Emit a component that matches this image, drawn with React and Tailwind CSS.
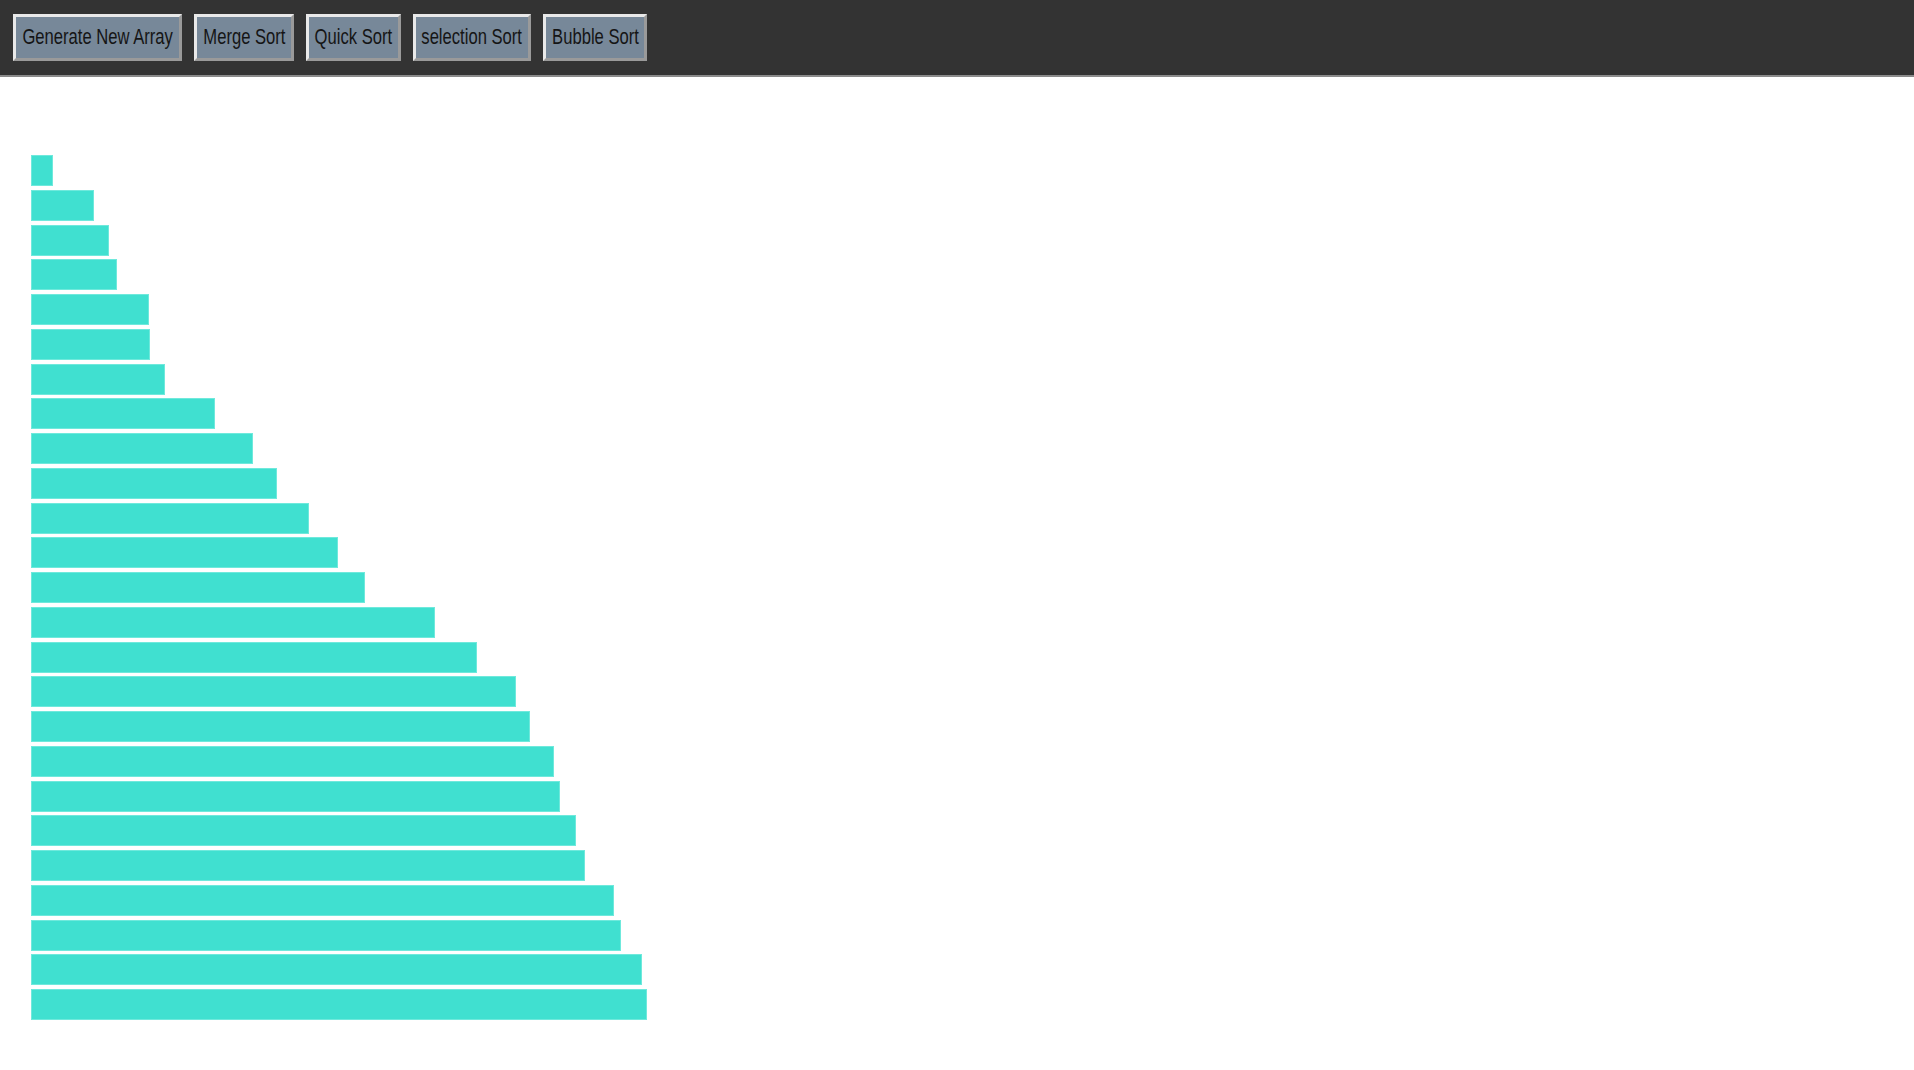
import React, { useState } from 'react';

const buttons = [
  { label: 'Generate New Array', width: 'w-[169px]' },
  { label: 'Merge Sort', width: 'w-[100px]' },
  { label: 'Quick Sort', width: 'w-[95px]' },
  { label: 'selection Sort', width: 'w-[118px]' },
  { label: 'Bubble Sort', width: 'w-[104px]' },
];

const initialArray = [
  22, 63, 78, 86, 118, 119, 134, 184, 222, 246, 278, 307, 334,
  404, 446, 485, 499, 523, 529, 545, 554, 583, 590, 611, 616,
];

export default function App() {
  const [array] = useState(initialArray);

  return (
    <div className="min-h-screen bg-white" style={{ fontFamily: '"Liberation Sans", Arial, sans-serif' }}>
      <div className="h-[77px] bg-[#333333] border-b-2 border-[#8a8a8a] flex items-center gap-[12px] px-[13px]">
        {buttons.map((b) => (
          <button
            key={b.label}
            className={`${b.width} h-[47px] bg-[#778899] border-[3px] border-t-[#e9e9e9] border-l-[#e9e9e9] border-r-[#9a9a9a] border-b-[#9a9a9a] flex items-center justify-center overflow-visible`}
          >
            <span className="inline-block whitespace-nowrap text-[22px] leading-none text-[#151515] scale-x-[0.755] -translate-y-[1px]">
              {b.label}
            </span>
          </button>
        ))}
      </div>

      <div className="pt-[78px] pl-[31px] flex flex-col gap-[3.75px]">
        {array.map((value, i) => (
          <div
            key={i}
            className="h-[31px] bg-[#40e0d0] border border-[#6fe9dc]"
            style={{ width: `${value}px` }}
          />
        ))}
      </div>
    </div>
  );
}
